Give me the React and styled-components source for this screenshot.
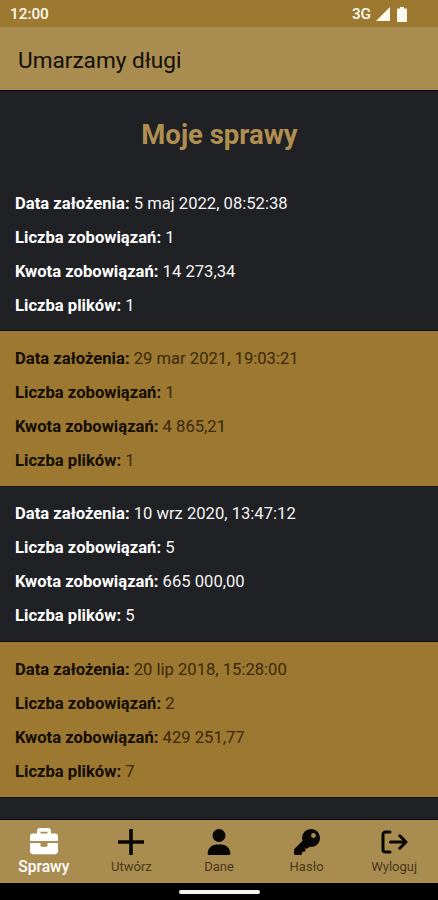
import React from 'react';
import styled, { createGlobalStyle } from 'styled-components';
import { FaBriefcase, FaKey } from 'react-icons/fa';
import { FaUser } from 'react-icons/fa6';

const GlobalStyle = createGlobalStyle`
    * {
        box-sizing: border-box;
    }
    body {
        margin: 0;
        background-color: #202125;
        font-family: Roboto, 'Liberation Sans', sans-serif;
    }
`;

const Screen = styled.div`
    display: flex;
    flex-direction: column;
    height: 900px;
    overflow: hidden;
    background-color: #202125;
`;

const StatusBar = styled.div`
    display: flex;
    justify-content: space-between;
    align-items: center;
    flex-shrink: 0;
    height: 27px;
    padding: 1px 31px 0 10px;
    background-color: #9c7831;
    color: #fffaf0;
    font-size: 15.3px;
    font-weight: 500;

    .Status_Icons {
        display: flex;
        align-items: center;
    }
    .Signal {
        margin-left: 5px;
    }
    .Battery {
        margin-left: 7px;
    }
`;

const Header = styled.header`
    display: flex;
    align-items: center;
    flex-shrink: 0;
    height: 64px;
    padding: 3px 18px 0;
    border-bottom: 1px solid #08090f;
    background-color: #a98d50;
    color: #120d05;
    font-size: 22.6px;
`;

const Content = styled.main`
    flex: 1;
    min-height: 0;
    overflow: hidden;
`;

const Title = styled.h1`
    margin: 0;
    padding: 27px 0 0 1px;
    height: 85px;
    color: #b08f50;
    font-size: 27.5px;
    line-height: 34px;
    font-weight: 700;
    text-align: center;
`;

const Case = styled.section`
    height: 155.4px;
    padding: 10.6px 15px 0;
    border-bottom: 1px solid ${({ $gold }) => ($gold ? '#17171b' : '#0c0d12')};
    background-color: ${({ $gold }) => ($gold ? '#9c7831' : '#202125')};
    color: ${({ $gold }) => ($gold ? '#3a2808' : '#f4f4f4')};
`;

const CaseLine = styled.div`
    height: 34px;
    line-height: 34px;
    font-size: 16.63px;
    white-space: nowrap;

    strong {
        color: ${({ $gold }) => ($gold ? '#130d02' : '#ffffff')};
        font-weight: 700;
    }
`;

const TabBar = styled.nav`
    display: flex;
    flex-shrink: 0;
    height: 64px;
    border-top: 1px solid #08090f;
    background-color: #a98d50;
`;

const Tab = styled.div`
    display: flex;
    flex: 1;
    flex-direction: column;
    align-items: center;
    color: ${({ $active }) => ($active ? '#ffffff' : '#080604')};

    .Icon {
        display: flex;
        justify-content: center;
        align-items: center;
        height: 38px;
        padding-top: ${({ $active }) => ($active ? '3px' : '6px')};
    }
    .Label {
        color: ${({ $active }) => ($active ? '#ffffff' : '#49371a')};
        font-size: ${({ $active }) => ($active ? '15.6px' : '13px')};
        font-weight: ${({ $active }) => ($active ? 500 : 400)};
        line-height: 18px;
    }
`;

const GestureBar = styled.div`
    display: flex;
    justify-content: center;
    flex-shrink: 0;
    height: 17px;
    padding-top: 7px;
    background-color: #000000;

    div {
        width: 81px;
        height: 4px;
        border-radius: 2px;
        background-color: #f4f4f4;
    }
`;

const PlusIcon = () => (
    <svg width="26" height="26" viewBox="0 0 26 26" fill="none" stroke="currentColor" strokeWidth="3.6">
        <path d="M13 0v26M0 13h26" />
    </svg>
);

const LogoutIcon = () => (
    <svg width="28" height="26" viewBox="0 0 28 26" fill="none" stroke="currentColor" strokeWidth="3" strokeLinecap="round" strokeLinejoin="round">
        <path d="M10 3H5.500a2.500 2.500 0 0 0-2.500 2.500v15A2.500 2.500 0 0 0 5.500 23H10M10.500 13H26M19.800 6.800L26 13l-6.200 6.200" />
    </svg>
);

const cases = [
    { date: '5 maj 2022, 08:52:38', debts: 1, amount: '14 273,34', files: 1 },
    { date: '29 mar 2021, 19:03:21', debts: 1, amount: '4 865,21', files: 1 },
    { date: '10 wrz 2020, 13:47:12', debts: 5, amount: '665 000,00', files: 5 },
    { date: '20 lip 2018, 15:28:00', debts: 2, amount: '429 251,77', files: 7 },
];

const tabs = [
    { name: 'Sprawy', icon: <FaBriefcase size={29} preserveAspectRatio="none" style={{ width: 28, height: 30 }} /> },
    { name: 'Utwórz', icon: <PlusIcon /> },
    { name: 'Dane', icon: <FaUser size={26} /> },
    { name: 'Hasło', icon: <FaKey size={26} /> },
    { name: 'Wyloguj', icon: <LogoutIcon /> },
];

const App = () => {
    return (
        <Screen>
            <GlobalStyle />
            <StatusBar>
                <div>12:00</div>
                <div className="Status_Icons">
                    <span>3G</span>
                    <svg className="Signal" width="14" height="14" viewBox="0 0 14 14">
                        <path d="M14 0v14H0z" fill="currentColor" />
                    </svg>
                    <svg className="Battery" width="10" height="15" viewBox="0 0 10 15">
                        <path d="M3 0h4v1.5h2q1 0 1 1V14q0 1-1 1H1q-1 0-1-1V2.500q0-1 1-1h2z" fill="currentColor" />
                    </svg>
                </div>
            </StatusBar>
            <Header>Umarzamy długi</Header>
            <Content>
                <Title>Moje sprawy</Title>
                {cases.map((item, i) => {
                    const gold = i % 2 === 1;
                    return (
                        <Case key={item.date} $gold={gold}>
                            <CaseLine $gold={gold}>
                                <strong>Data założenia:</strong> {item.date}
                            </CaseLine>
                            <CaseLine $gold={gold}>
                                <strong>Liczba zobowiązań:</strong> {item.debts}
                            </CaseLine>
                            <CaseLine $gold={gold}>
                                <strong>Kwota zobowiązań:</strong> {item.amount}
                            </CaseLine>
                            <CaseLine $gold={gold}>
                                <strong>Liczba plików:</strong> {item.files}
                            </CaseLine>
                        </Case>
                    );
                })}
            </Content>
            <TabBar>
                {tabs.map((tab, i) => (
                    <Tab key={tab.name} $active={i === 0}>
                        <div className="Icon">{tab.icon}</div>
                        <span className="Label">{tab.name}</span>
                    </Tab>
                ))}
            </TabBar>
            <GestureBar>
                <div></div>
            </GestureBar>
        </Screen>
    );
};

export default App;
